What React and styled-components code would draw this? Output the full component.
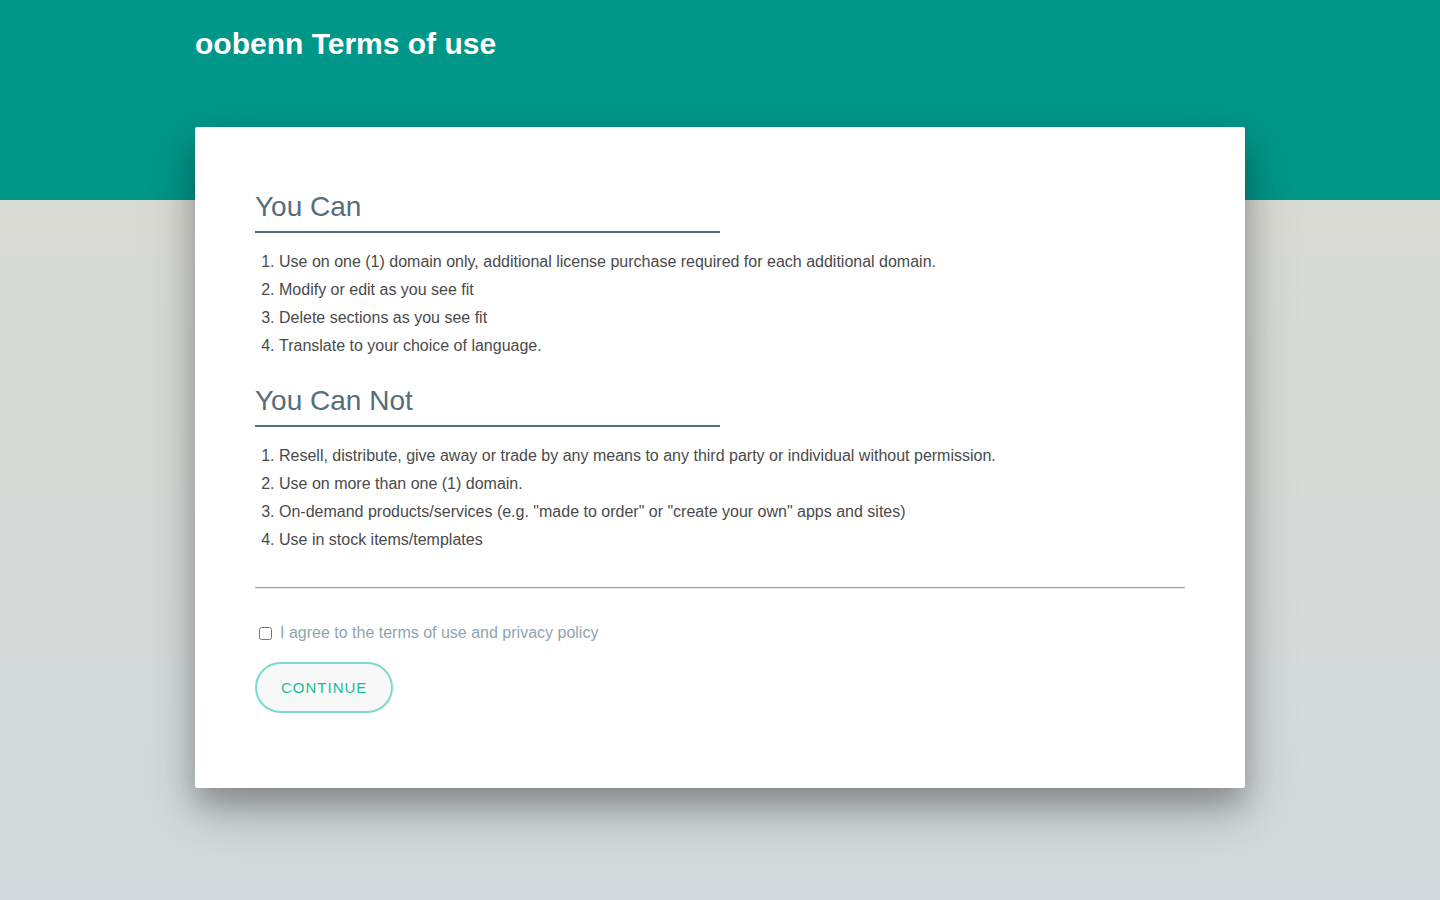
import React from "react";
import styled, { createGlobalStyle } from "styled-components";

const GlobalStyle = createGlobalStyle`
  html, body {
    margin: 0;
    padding: 0;
  }
  body {
    min-height: 900px;
    font-family: "Liberation Sans", Arial, sans-serif;
    background: linear-gradient(180deg, #dbdbd3 0%, #d8dad6 40%, #d3dadd 100%);
  }
`;

const Page = styled.div`
  min-height: 900px;
`;

const Header = styled.header`
  height: 200px;
  background: #009688;
`;

const HeaderInner = styled.div`
  width: 1050px;
  margin: 0 auto;
  padding-top: 26px;
`;

const Title = styled.h1`
  margin: 0;
  color: #ffffff;
  font-size: 30px;
  font-weight: 700;
  line-height: 36px;
`;

const Card = styled.main`
  position: relative;
  width: 1050px;
  box-sizing: border-box;
  margin: -73px auto 0;
  padding: 64px 60px 75px;
  background: #ffffff;
  border-radius: 2px;
  box-shadow: 0 16px 28px rgba(0, 0, 0, 0.22), 0 25px 55px rgba(0, 0, 0, 0.21);
`;

const SectionTitle = styled.h2`
  width: 465px;
  margin: ${(p) => (p.$first ? "0" : "25px 0 0")};
  padding-bottom: 8px;
  border-bottom: 2px solid #546e7a;
  color: #546e7a;
  font-size: 28px;
  font-weight: 400;
  line-height: 32px;
`;

const List = styled.ol`
  margin: 15px 0 0;
  padding-left: 24px;
  color: #4a4a4a;
  font-size: 16px;
  line-height: 28px;
`;

const Divider = styled.hr`
  margin: 33px 0 0;
  border: 0;
  border-top: 1px solid #9e9e9e;
  border-bottom: 1px solid #eeeeee;
`;

const AgreeRow = styled.label`
  display: flex;
  align-items: center;
  margin-top: 30px;
  color: #90a4ae;
  font-size: 16px;
  line-height: 28px;
  cursor: pointer;

  input {
    margin: 0 8px 0 4px;
    width: 13px;
    height: 13px;
  }
`;

const ContinueButton = styled.button`
  display: block;
  margin-top: 15px;
  height: 51px;
  padding: 0 24px;
  border: 2px solid #7fd9c8;
  border-radius: 26px;
  background: #f8f8f8;
  color: #1abc9c;
  font-family: "Liberation Sans", Arial, sans-serif;
  font-size: 15px;
  letter-spacing: 1px;
  cursor: pointer;
`;

const canItems = [
  "Use on one (1) domain only, additional license purchase required for each additional domain.",
  "Modify or edit as you see fit",
  "Delete sections as you see fit",
  "Translate to your choice of language.",
];

const cannotItems = [
  "Resell, distribute, give away or trade by any means to any third party or individual without permission.",
  "Use on more than one (1) domain.",
  'On-demand products/services (e.g. "made to order" or "create your own" apps and sites)',
  "Use in stock items/templates",
];

export default function App() {
  return (
    <Page>
      <GlobalStyle />
      <Header>
        <HeaderInner>
          <Title>oobenn Terms of use</Title>
        </HeaderInner>
      </Header>
      <Card>
        <SectionTitle $first>You Can</SectionTitle>
        <List>
          {canItems.map((t) => (
            <li key={t}>{t}</li>
          ))}
        </List>
        <SectionTitle>You Can Not</SectionTitle>
        <List>
          {cannotItems.map((t) => (
            <li key={t}>{t}</li>
          ))}
        </List>
        <Divider />
        <AgreeRow>
          <input type="checkbox" />
          I agree to the terms of use and privacy policy
        </AgreeRow>
        <ContinueButton>CONTINUE</ContinueButton>
      </Card>
    </Page>
  );
}
